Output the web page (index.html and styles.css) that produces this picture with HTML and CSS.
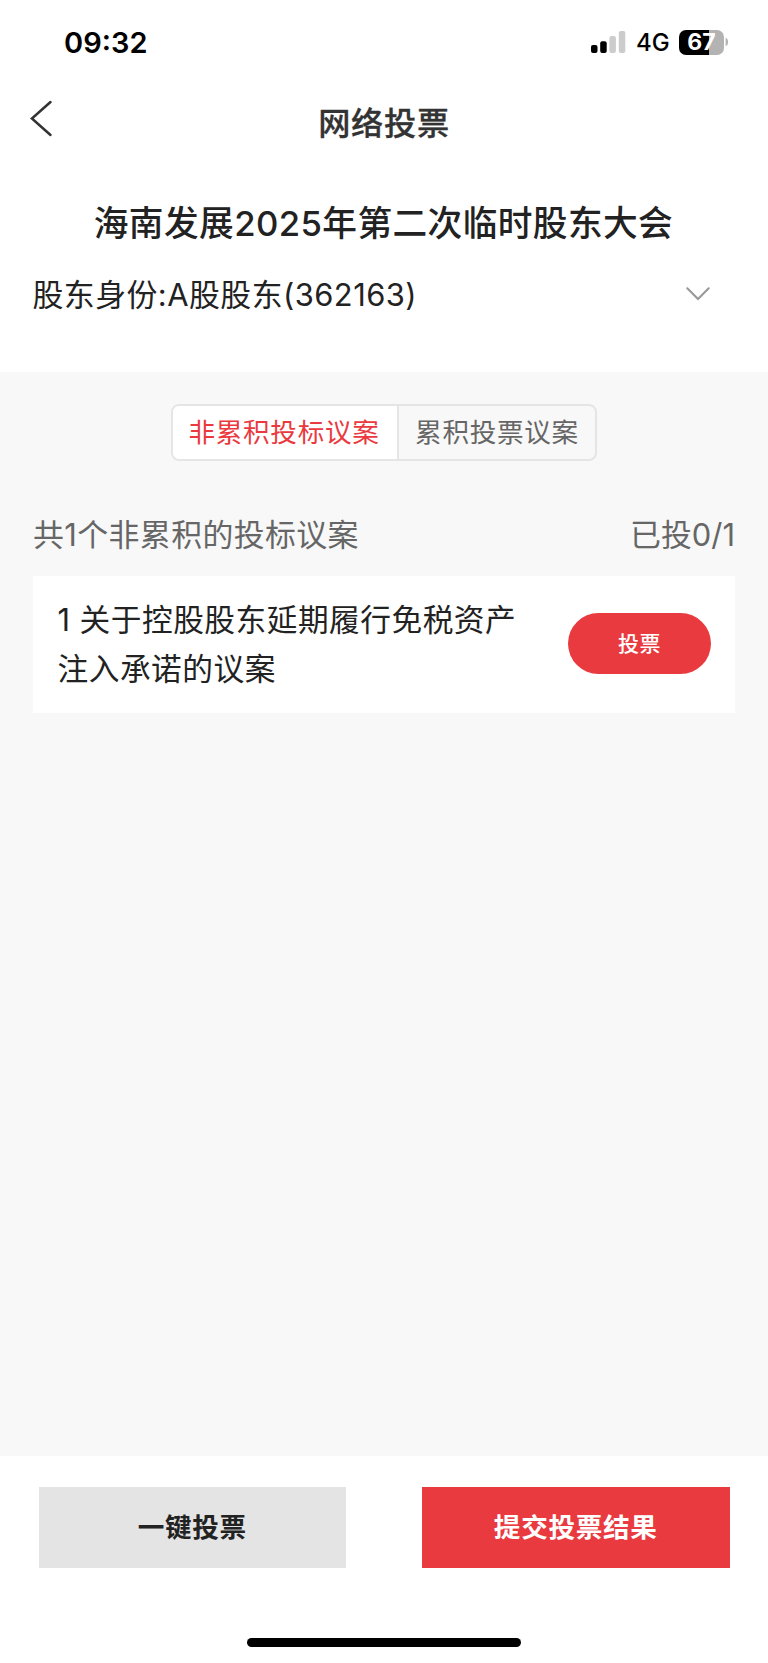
FILE: index.html
```html
<!DOCTYPE html>
<html lang="zh-CN">
<head>
<meta charset="utf-8">
<meta name="viewport" content="width=device-width">
<title>网络投票</title>
<link rel="stylesheet" href="styles.css">
</head>
<body>
<div class="screen">
  <div class="status">
    <span class="time">09:32</span>
    <div class="indicators">
      <svg class="signal" width="35" height="22" viewBox="0 0 35 22">
        <rect x="0" y="14" width="6.5" height="8" rx="2"/>
        <rect x="9.2" y="10.2" width="6.5" height="11.8" rx="2"/>
        <rect x="18.4" y="5" width="6.5" height="17" rx="2" fill="#ccc"/>
        <rect x="27.8" y="0" width="6.5" height="22" rx="2" fill="#ccc"/>
      </svg>
      <span class="network">4G</span>
      <div class="battery">
        <div class="cell">67</div>
        <svg class="cap" width="4" height="10" viewBox="0 0 4 10"><path d="M.6 .6Q3.2 2 3.2 5T.6 9.2Z" fill="#b3b3b3"/></svg>
      </div>
    </div>
  </div>
  <header class="nav">
    <svg class="back" width="24" height="38" viewBox="0 0 24 38" fill="none" stroke="#333" stroke-width="2.5" stroke-linecap="round" stroke-linejoin="miter"><path d="M20.5 2L1.9 18.5L20.5 35"/></svg>
    <h1 class="nav-title">网络投票</h1>
  </header>
  <section class="meeting">
    <h2 class="meeting-title">海南发展2025年第二次临时股东大会</h2>
    <div class="identity">
      <span class="identity-text">股东身份:A股股东(362163)</span>
      <svg class="chevron" width="24" height="14" viewBox="0 0 24 14" fill="none" stroke="#999" stroke-width="2.1" stroke-linecap="round"><path d="M1.3 1.3L12 12L22.7 1.3"/></svg>
    </div>
  </section>
  <main class="content">
    <div class="tabs">
      <div class="tab tab-active">非累积投标议案</div>
      <div class="tab">累积投票议案</div>
    </div>
    <div class="summary">
      <span>共1个非累积的投标议案</span>
      <span class="voted">已投0/1</span>
    </div>
    <article class="card">
      <p class="proposal">1 关于控股股东延期履行免税资产注入承诺的议案</p>
      <button class="vote">投票</button>
    </article>
  </main>
  <footer class="footer">
    <div class="actions">
      <button class="action">一键投票</button>
      <button class="action action-primary">提交投票结果</button>
    </div>
    <div class="home-bar"></div>
  </footer>
</div>
</body>
</html>
```
FILE: styles.css
```css
* { box-sizing: border-box; }
body {
  margin: 0;
  background: #fff;
  color: #222;
  font-family: Inter, "Noto Sans CJK SC", sans-serif;
}
h1, h2, p { margin: 0; font-weight: 500; }
button { border: 0; padding: 0; font-family: inherit; }
svg { display: block; flex: none; }
.screen {
  width: 768px;
  height: 1663px;
  display: flex;
  flex-direction: column;
  overflow: hidden;
}
.status {
  height: 84px;
  padding: 0 39px 0 64px;
  display: flex;
  justify-content: space-between;
  align-items: center;
  color: #000;
}
.time { padding-top: 1px; font-size: 29px; font-weight: 600; line-height: 83px; }
.indicators { display: flex; align-items: center; }
.network { margin-left: 10px; padding-top: 1px; width: 43px; font-size: 24px; font-weight: 500; }
.battery { display: flex; align-items: center; gap: 1px; }
.cell {
  width: 45px;
  height: 25px;
  border-radius: 7px;
  background: linear-gradient(90deg, #000 30px, #b3b3b3 30px);
  color: #fff;
  font-size: 23px;
  font-weight: 700;
  line-height: 25px;
  text-align: center;
}
.nav {
  height: 76px;
  padding: 16px 29px 0 30px;
  display: grid;
  grid-template-columns: 59px 1fr 60px;
}
.nav-title {
  padding-top: 1px;
  color: #333;
  font-size: 32.2px;
  letter-spacing: .7px;
  line-height: 46px;
  text-align: center;
  -webkit-text-stroke: .3px #333;
}
.meeting { height: 212px; padding: 37px 33px 0 32px; }
.meeting-title {
  font-size: 34.7px;
  letter-spacing: .4px;
  line-height: 52px;
  text-align: center;
  white-space: nowrap;
}
.identity {
  margin-top: 19px;
  height: 52px;
  padding-right: 25px;
  display: flex;
  justify-content: space-between;
  align-items: center;
}
.identity-text { padding: 0 0 4px .5px; font-size: 30.9px; letter-spacing: .45px; }
.content { height: 1084px; padding: 32px 33px 0; background: #f8f8f8; }
.tabs {
  width: 426px;
  height: 57px;
  margin: 0 auto;
  border: 2px solid #e5e5e5;
  border-radius: 8px;
  display: flex;
  overflow: hidden;
  color: #666;
  font-size: 26.6px;
  letter-spacing: .7px;
  line-height: 53px;
  text-align: center;
}
.tab { flex: 1; }
.tab-active {
  flex: none;
  width: 226px;
  padding-right: 2px;
  border-right: 2px solid #e5e5e5;
  background: #fff;
  color: #e93a40;
}
.summary {
  margin-top: 48px;
  height: 67px;
  display: flex;
  justify-content: space-between;
  color: #666;
  font-size: 30.9px;
  letter-spacing: .4px;
  line-height: 52px;
}
.voted { letter-spacing: 0; }
.card {
  height: 136.5px;
  padding: 20px 24px 0 24.5px;
  display: flex;
  justify-content: space-between;
  background: #fff;
}
.proposal {
  width: 470px;
  font-size: 30.7px;
  font-weight: 400;
  letter-spacing: .5px;
  line-height: 48.5px;
}
.vote {
  margin-top: 17px;
  padding-bottom: 3px;
  width: 143px;
  height: 61px;
  border-radius: 31px;
  background: #e93a40;
  color: #fff;
  font-size: 21px;
  font-weight: 500;
  letter-spacing: .5px;
}
.footer { height: 207px; padding: 31px 38.5px 0; }
.actions { display: flex; justify-content: space-between; }
.action {
  width: 307.5px;
  height: 81px;
  padding-bottom: 4px;
  background: #e4e4e4;
  color: #222;
  font-size: 26.6px;
  font-weight: 700;
  letter-spacing: .7px;
}
.action-primary { background: #e93a40; color: #fff; }
.home-bar {
  width: 274px;
  height: 9px;
  margin: 70px auto 0;
  border-radius: 5px;
  background: #000;
}
```
